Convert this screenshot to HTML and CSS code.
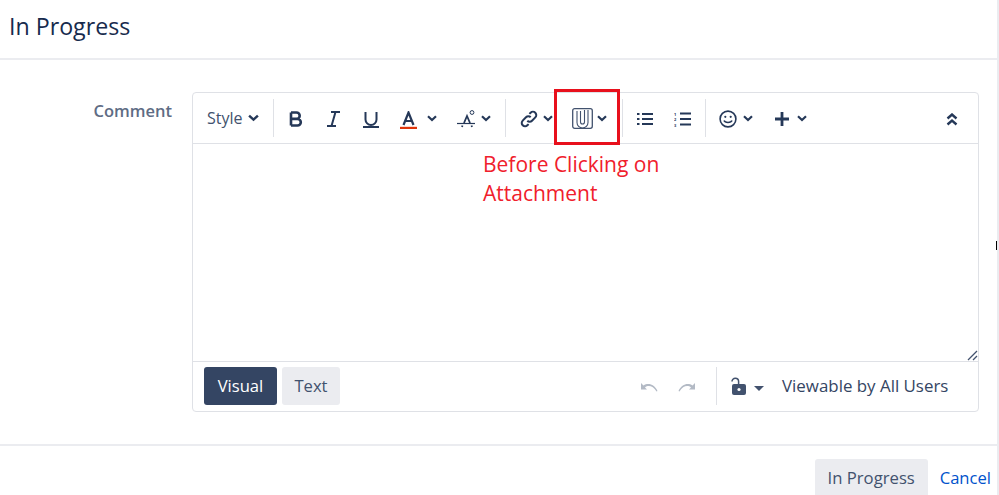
FILE: index.html
```html
<!DOCTYPE html>
<html lang="en">
<head>
<meta charset="utf-8">
<title>In Progress</title>
<link rel="stylesheet" href="styles.css">
</head>
<body>
<div class="page">
  <header class="head"><h1 class="title">In Progress</h1></header>
  <main class="content">
    <label class="field-label">Comment</label>
    <div class="editor">
      <div class="toolbar">
        <div class="group g-style">
          <span class="style-text">Style</span>
          <svg class="chev chev-style" viewBox="0 0 10 7"><path d="M1 1.300 5 5l4-3.700"/></svg>
        </div>
        <div class="group g-format">
          <svg class="ic ic-b" viewBox="0 0 14 16"><path d="M2 1.500v13M2 1.500h5.500a3.200 3.200 0 0 1 0 6.400H2M2 7.900h6.500a3.300 3.300 0 0 1 0 6.600H2"/></svg>
          <svg class="ic ic-i" viewBox="0 0 13 16"><path d="M4 1h9M0 15h9M8.500 1 4.500 15"/></svg>
          <svg class="ic ic-u" viewBox="0 0 16 17"><path d="M2.500 1v7.500a5.500 5.500 0 0 0 11 0V1M0 16h16"/></svg>
          <svg class="ic ic-a" viewBox="0 0 17 18"><path class="a-glyph" d="M3.500 14 8.500 1.500l5 12.500M5 10h7"/><path class="a-bar" d="M0 17h17"/></svg>
          <svg class="chev chev-a" viewBox="0 0 10 7"><path d="M1 1.300 5 5l4-3.700"/></svg>
          <svg class="ic ic-clear" viewBox="0 0 20 19"><path class="clear-line" d="M1 13.500h18"/><path class="clear-a" d="M8 13 11 6l3 7M6.500 15.500 6 17M15.500 15.500l.5 1.500"/><circle class="clear-dot" cx="16" cy="2.500" r="1.900"/></svg>
          <svg class="chev" viewBox="0 0 10 7"><path d="M1 1.300 5 5l4-3.700"/></svg>
        </div>
        <div class="group g-insert">
          <svg class="ic ic-link" viewBox="0 0 20 20"><path d="M8.300 11.700a3.300 3.300 0 0 0 4.700 0l3.300-3.300a3.300 3.300 0 0 0-4.700-4.700l-1.200 1.200"/><path d="M11.700 8.300a3.300 3.300 0 0 0-4.700 0l-3.300 3.300a3.300 3.300 0 0 0 4.700 4.700l1.200-1.200"/></svg>
          <svg class="chev chev-link" viewBox="0 0 10 7"><path d="M1 1.300 5 5l4-3.700"/></svg>
          <svg class="ic ic-attach" viewBox="0 0 21 21"><rect x=".7" y=".7" width="19.600" height="19.600" rx="2"/><path d="M5 3v11.500a5.500 5.500 0 0 0 11 0V2M8.500 3v11a2 2 0 0 0 4 0V2"/></svg>
          <svg class="chev" viewBox="0 0 10 7"><path d="M1 1.300 5 5l4-3.700"/></svg>
        </div>
        <div class="group g-list">
          <svg class="ic ic-ul" viewBox="0 0 16 14"><path d="M5 2h11M5 7h11M5 12h11M0 2h2.500M0 7h2.500M0 12h2.500"/></svg>
          <svg class="ic ic-ol" viewBox="0 0 17 16"><path d="M6 2.500h11M6 8h11M6 13.500h11"/><text class="ol-num" x="0" y="4.500">1</text><text class="ol-num" x="0" y="10">2</text><text class="ol-num" x="0" y="15.500">3</text></svg>
        </div>
        <div class="group g-more">
          <svg class="ic ic-smile" viewBox="0 0 18 18"><circle cx="9" cy="9" r="7.900"/><path d="M5 10.500c1 2.600 7 2.600 8 0"/><circle class="dot" cx="6.300" cy="6.800" r="1.100"/><circle class="dot" cx="11.700" cy="6.800" r="1.100"/></svg>
          <svg class="chev chev-smile" viewBox="0 0 10 7"><path d="M1 1.300 5 5l4-3.700"/></svg>
          <svg class="ic ic-plus" viewBox="0 0 14 14"><path d="M7 0v14M0 7h14"/></svg>
          <svg class="chev" viewBox="0 0 10 7"><path d="M1 1.300 5 5l4-3.700"/></svg>
        </div>
        <svg class="collapse" viewBox="0 0 12 13"><path d="M1.500 5.500 6 1.500l4.500 4M1.500 11.500 6 7.500l4.500 4"/></svg>
      </div>
      <div class="body-area">
        <svg class="grip" viewBox="0 0 11 11"><path d="M1 10 10 1M6 10l4-4"/></svg>
      </div>
      <div class="bottom-bar">
        <button class="tab tab-on">Visual</button>
        <button class="tab tab-off">Text</button>
        <div class="history">
          <svg class="hist" viewBox="0 0 18 11"><path d="M1 1v6.500h6L5 5.500C8 3 13 3.500 16.500 9.500l1-.5C14.500 2 8 .5 3.500 3.500Z"/></svg>
          <svg class="hist" viewBox="0 0 18 11"><path d="M17 1v6.500h-6l2-2C10 3 5 3.500 1.500 9.500l-1-.5C3.500 2 10 .5 14.500 3.500Z"/></svg>
        </div>
        <div class="perm">
          <svg class="lock" viewBox="0 0 15 18"><path class="shackle" d="M1 4.500a3.300 3.300 0 0 1 6.600 0V9"/><rect class="lock-body" x="1" y="7" width="14" height="11" rx="2"/><circle class="lock-hole" cx="8" cy="12.500" r="1.600"/></svg>
          <span class="caret"></span>
          <span class="perm-text">Viewable by All Users</span>
        </div>
      </div>
    </div>
  </main>
  <footer class="foot">
    <button class="submit">In Progress</button>
    <a class="cancel" href="#">Cancel</a>
  </footer>
  <div class="mark"></div>
  <p class="note">Before Clicking on<br>Attachment</p>
  <div class="cursor"></div>
</div>
</body>
</html>
```
FILE: styles.css
```css
* { box-sizing: border-box; }
html, body { margin: 0; padding: 0; }
body { background: #fff; font-family: "Open Sans", "Noto Sans", sans-serif; color: #253858; overflow: hidden; }
.page { position: relative; width: 999px; height: 495px; overflow: hidden; border-right: 2px solid #ebecf0; }
.head { height: 60px; border-bottom: 2px solid #ebecf0; padding: 8px 0 0 9px; }
.title { margin: 0; font-size: 23.200px; line-height: 36px; font-weight: 400; color: #172b4d; }
.content { height: 386px; display: flex; align-items: flex-start; padding-top: 32px; border-bottom: 2px solid #ebecf0; }
.field-label { width: 172px; flex: none; padding-top: 8px; text-align: right; font-size: 16.500px; line-height: 22px; font-weight: 600; color: #5e6c84; }
.editor { margin-left: 20px; width: 787px; height: 320px; border: 1px solid #dfe1e6; border-radius: 4px; display: flex; flex-direction: column; }
.toolbar { height: 51px; flex: none; border-bottom: 1px solid #dfe1e6; display: flex; align-items: center; position: relative; }
.group { display: flex; align-items: center; height: 38px; border-right: 1px solid #dfe1e6; flex: none; }
.g-style { width: 81px; padding-left: 14px; }
.style-text { font-size: 16px; line-height: 22px; color: #42526e; width: 41px; }
.g-format { width: 232px; padding-left: 15px; }
.g-insert { width: 117px; padding-left: 13px; }
.g-list { width: 83px; padding-left: 14px; }
.g-more { padding-left: 13px; border-right: 0; }
svg path, svg rect, svg circle { fill: none; stroke: #253858; }
.chev { width: 10px; height: 7px; flex: none; }
.chev path { stroke-width: 2.200; }
.chev-style { width: 11px; height: 8px; }
.ic { flex: none; }
.ic-b { width: 14px; height: 16px; margin: 2px 24px 0 0; }
.ic-b path { stroke-width: 2.600; }
.ic-i { width: 13px; height: 16px; margin: 2px 23px 0 0; }
.ic-i path { stroke-width: 2; }
.ic-u { width: 16px; height: 17px; margin: 3px 21px 0 0; }
.ic-u path { stroke-width: 2; }
.ic-a { width: 17px; height: 18px; margin: 4px 10px 0 0; }
.ic-a .a-glyph { stroke-width: 2.200; }
.ic-a .a-bar { stroke: #de350b; stroke-width: 2.400; }
.chev-a { margin-right: 19px; }
.ic-clear { width: 20px; height: 19px; margin: 3px 5px 0 0; }
.clear-line { stroke-width: 1.200; }
.clear-a { stroke-width: 1.800; }
.clear-dot { stroke-width: 1; }
.ic-link { width: 20px; height: 20px; margin: 2px 4px 0 0; }
.ic-link path { stroke-width: 2; }
.chev-link { margin-right: 19px; }
.ic-attach { width: 21px; height: 21px; margin: 1px 4px 0 0; }
.ic-attach rect { stroke-width: 1.300; stroke: #42526e; }
.ic-attach path { stroke-width: 1.100; stroke: #42526e; }
.ic-ul { width: 16px; height: 14px; margin: 2px 21px 0 0; }
.ic-ul path { stroke-width: 2; }
.ic-ol { width: 17px; height: 16px; margin-top: 2px; }
.ic-ol path { stroke-width: 2; }
.ol-num { font-size: 4px; font-weight: 700; fill: #253858; font-family: "Open Sans", sans-serif; }
.ic-smile { width: 18px; height: 18px; margin: 2px 6px 0 0; }
.ic-smile circle, .ic-smile path { stroke-width: 1.600; }
.ic-smile .dot { fill: #253858; stroke: none; }
.chev-smile { margin-right: 22px; }
.ic-plus { width: 14px; height: 14px; margin: 2px 8px 0 0; }
.ic-plus path { stroke-width: 2.800; }
.collapse { position: absolute; right: 20px; top: 20px; width: 12px; height: 13px; }
.collapse path { stroke-width: 2.400; }
.body-area { flex: 1; position: relative; }
.grip { position: absolute; right: 0; bottom: 0; width: 11px; height: 11px; }
.grip path { stroke: #42526e; stroke-width: 1.300; }
.bottom-bar { height: 50px; flex: none; border-top: 1px solid #dfe1e6; display: flex; align-items: center; padding: 0 0 1px 11px; }
.tab { border: 0; border-radius: 3px; height: 38px; font: 400 16.600px/22px "Open Sans", sans-serif; padding: 0; }
.tab-on { width: 73px; background: #344563; color: #fff; margin-right: 5px; }
.tab-off { width: 58px; background: #ebecf0; color: #42526e; }
.history { margin-left: auto; display: flex; align-items: center; gap: 20px; padding-right: 20px; }
.hist { width: 18px; height: 11px; margin-top: 2px; }
.hist path { fill: #b3bac5; stroke: none; }
.perm { width: 262px; height: 38px; border-left: 1px solid #dfe1e6; display: flex; align-items: center; padding-left: 14px; }
.lock { width: 15px; height: 18px; flex: none; }
.lock .shackle { stroke: #42526e; stroke-width: 1.500; }
.lock .lock-body { fill: #42526e; stroke: none; }
.lock .lock-hole { fill: #fff; stroke: none; }
.caret { width: 0; height: 0; border: 5px solid transparent; border-top: 5px solid #42526e; border-bottom: 0; margin-left: 8px; margin-top: 4px; }
.perm-text { margin-left: 18px; font-size: 16.900px; line-height: 22px; color: #344563; }
.foot { display: flex; justify-content: flex-end; align-items: flex-start; padding: 13px 6px 0 0; }
.submit { width: 113px; height: 38px; border: 0; border-radius: 3px; background: #ebecf0; color: #42526e; font: 400 16.700px/22px "Open Sans", sans-serif; padding: 0; }
.cancel { margin-left: 12px; font-size: 16.600px; line-height: 38px; color: #0052cc; text-decoration: none; }
.mark { position: absolute; left: 554px; top: 89px; width: 66px; height: 56px; border: 3px solid #e8101c; }
.note { position: absolute; left: 483px; top: 150px; margin: 0; font-size: 21px; line-height: 29px; color: #f0202c; }
.cursor { position: absolute; right: -2px; top: 241px; width: 3px; height: 9px; border: 1px solid #000; border-right: 0; }
```
